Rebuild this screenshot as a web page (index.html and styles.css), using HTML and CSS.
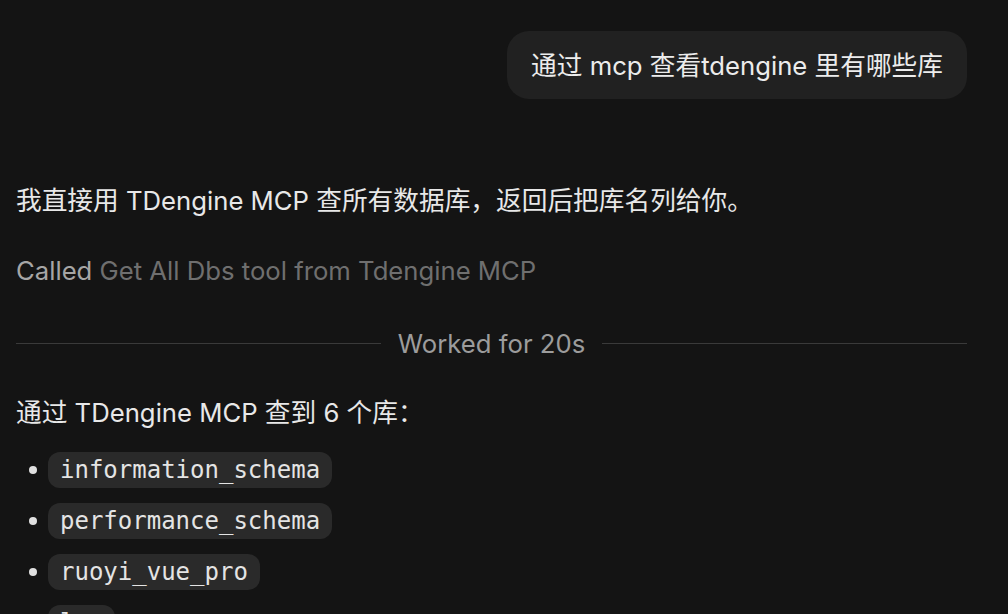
FILE: index.html
```html
<!DOCTYPE html>
<html lang="zh-CN">
<head>
  <meta charset="UTF-8" />
  <meta name="viewport" content="width=device-width, initial-scale=1.0" />
  <title>TDengine MCP</title>
  <link rel="stylesheet" href="styles.css">
</head>
<body>

<div class="thread">
  <div class="user-row">
    <div class="bubble">通过 mcp 查看tdengine 里有哪些库</div>
  </div>

  <p class="reply">我直接用 TDengine MCP 查所有数据库，返回后把库名列给你。</p>

  <p class="tool-call"><span class="called">Called</span> Get All Dbs tool from Tdengine MCP</p>

  <div class="divider"><span>Worked for 20s</span></div>

  <p class="reply">通过 TDengine MCP 查到 6 个库：</p>

  <ul class="db-list">
    <li><code>information_schema</code></li>
    <li><code>performance_schema</code></li>
    <li><code>ruoyi_vue_pro</code></li>
    <li><code>log</code></li>
  </ul>
</div>

</body>
</html>
```

FILE: styles.css
```css
* {
  box-sizing: border-box;
}
body {
  margin: 0;
  background: #141414;
  color: #e8e8e8;
  font-family: Inter, "Noto Sans CJK SC", sans-serif;
  font-size: 25.7px;
  overflow: hidden;
  height: 100vh;
}

.thread {
  width: 951px;
  margin-left: 16px;
  padding-top: 31px;
}

.user-row {
  display: flex;
  justify-content: flex-end;
}

.bubble {
  background: #212121;
  border-radius: 22px;
  padding: 1px 24px 0;
  height: 68px;
  line-height: 67px;
  color: #ececec;
}

.reply {
  margin: 0;
  line-height: 40px;
}

.thread > .reply:first-of-type {
  margin-top: 82px;
}

.tool-call {
  margin: 30px 0 0;
  line-height: 40px;
  color: #6f6f6f;
}

.called {
  color: #a6a6a6;
}

.divider {
  display: flex;
  align-items: center;
  gap: 17px;
  margin-top: 32px;
  height: 40px;
  color: #9c9c9c;
}

.divider::before,
.divider::after {
  content: "";
  flex: 1;
  height: 1px;
  background: #3a3a3a;
}

.divider + .reply {
  margin-top: 30px;
}

.db-list {
  margin: 11px 0 0;
  padding-left: 32px;
}

.db-list li {
  height: 51px;
  display: flex;
  align-items: center;
  position: relative;
}

.db-list li::before {
  content: "";
  position: absolute;
  left: -19px;
  top: 22px;
  width: 8px;
  height: 8px;
  border-radius: 50%;
  background: #e0e0e0;
}

code {
  font-family: "DejaVu Sans Mono", monospace;
  font-size: 24px;
  background: #2a2a2a;
  color: #e4e4e4;
  border-radius: 12px;
  padding: 0 12px;
  height: 36px;
  line-height: 36px;
}
```
